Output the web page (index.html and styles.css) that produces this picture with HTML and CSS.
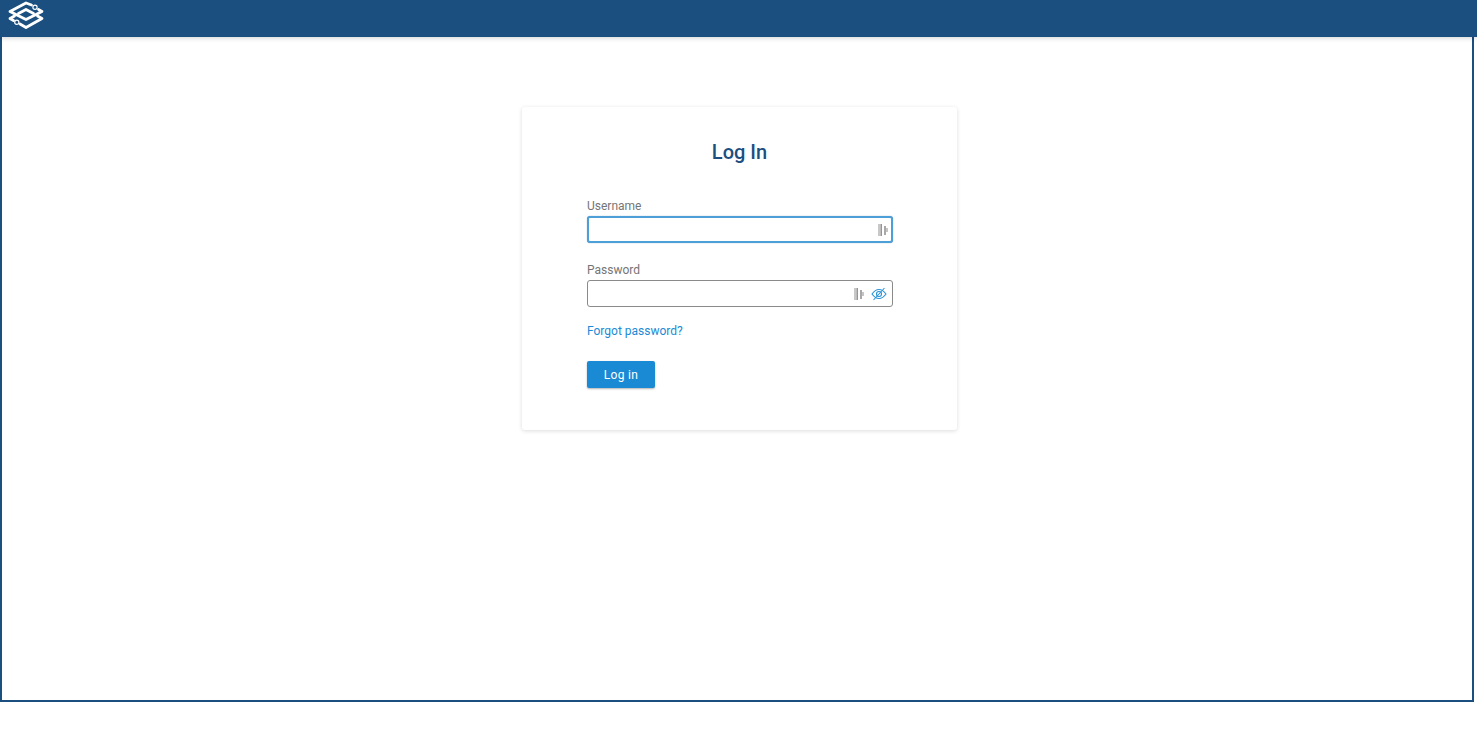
FILE: index.html
```html
<!DOCTYPE html>
<html lang="en">
<head>
<meta charset="utf-8">
<title>Log In</title>
<link rel="stylesheet" href="styles.css">
</head>
<body>
<div class="app">
  <header class="topbar">
    <svg class="logo" width="36" height="30" viewBox="0 0 36 30" fill="none" stroke="#fff" stroke-width="2.800" stroke-linejoin="round" stroke-linecap="round">
      <path d="M23.500 4 L18 2 L2 10.500 L18 18.500 L34 10.500 L30.500 8.500"/>
      <path d="M10.500 12.500 L18 8.500 L25.500 12.500"/>
      <path d="M6.500 15 L2 17.500 L5.500 19.500 M12 23 L18 26.500 L34 17.500 L29.500 15"/>
      <circle cx="27" cy="6.200" r="2.100" stroke-width="1.200"/>
      <circle cx="8.800" cy="21.200" r="2.100" stroke-width="1.200"/>
    </svg>
  </header>
  <main class="content">
    <section class="card">
      <h1 class="title">Log In</h1>
      <form class="form">
        <div class="field">
          <label class="label">Username</label>
          <div class="input input-focus">
            <svg class="key" width="10" height="14" viewBox="0 0 10 14"><path d="M0 1h2.500v12H0z" fill="#c8c8c8"/><path d="M2.500 1h1.500v12H2.500z" fill="#969696"/><path d="M6 3h2v9H6z" fill="#a8a8a8"/><path d="M8 5h2v4H8z" fill="#c4c4c4"/></svg>
          </div>
        </div>
        <div class="field">
          <label class="label">Password</label>
          <div class="input">
            <svg class="key" width="10" height="14" viewBox="0 0 10 14"><path d="M0 1h2.500v12H0z" fill="#c8c8c8"/><path d="M2.500 1h1.500v12H2.500z" fill="#969696"/><path d="M6 3h2v9H6z" fill="#a8a8a8"/><path d="M8 5h2v4H8z" fill="#c4c4c4"/></svg>
            <svg class="eye" width="16" height="14" viewBox="0 0 16 14" fill="none" stroke="#2a93d8" stroke-width="1.100">
              <path d="M1 7 C3.500 3.500 5.800 2.500 8 2.500 C10.200 2.500 12.500 3.500 15 7 C12.500 10.500 10.200 11.500 8 11.500 C5.800 11.500 3.500 10.500 1 7 Z"/>
              <circle cx="8" cy="7" r="2.500"/>
              <path d="M2.500 13 L13.500 1"/>
            </svg>
          </div>
        </div>
        <a class="forgot" href="#">Forgot password?</a>
        <button class="submit" type="button">Log in</button>
      </form>
    </section>
  </main>
</div>
</body>
</html>
```

FILE: styles.css
```css
* { box-sizing: border-box; }
html, body { margin: 0; padding: 0; background: #fff; }
body { font-family: Roboto, "Liberation Sans", sans-serif; height: 747px; overflow: hidden; }
.app {
  width: 1474px;
  height: 702px;
  border: 2px solid #1b4f80;
  border-top: 0;
  display: flex;
  flex-direction: column;
}
.topbar {
  height: 37px;
  margin: 0 -5px 0 -2px;
  background: #1b4f80;
  box-shadow: 0 1px 5px rgba(0, 0, 0, 0.18);
  padding: 1px 0 0 8px;
  flex: none;
}
.logo { display: block; }
.content {
  flex: 1;
  display: flex;
  justify-content: center;
  align-items: flex-start;
  padding: 70px 0 0 5px;
}
.card {
  width: 435px;
  height: 323px;
  background: #fff;
  border-radius: 3px;
  box-shadow: 0 1px 4px rgba(0, 0, 0, 0.14);
  padding: 33px 65px 0 65px;
}
.title {
  margin: 0 0 34px;
  height: 24px;
  line-height: 24px;
  font-size: 20px;
  font-weight: 500;
  color: #1b4f80;
  text-align: center;
}
.form { display: flex; flex-direction: column; align-items: flex-start; }
.field { width: 306px; margin-bottom: 19px; }
.field + .field { margin-bottom: 16px; }
.label {
  display: block;
  height: 17px;
  line-height: 17px;
  margin-bottom: 1px;
  font-size: 12px;
  color: #757575;
}
.input {
  height: 27px;
  border: 1px solid #8a8a8a;
  border-radius: 3px;
  background: #fff;
  display: flex;
  justify-content: flex-end;
  align-items: center;
  gap: 7px;
  padding-right: 5px;
}
.input-focus {
  border: 2px solid #4d9fd8;
  box-shadow: 0 0 1px rgba(27, 79, 128, 0.6);
  padding-right: 3px;
}
.forgot {
  display: block;
  height: 17px;
  line-height: 17px;
  font-size: 12px;
  color: #1a8ad5;
  text-decoration: none;
}
.submit {
  margin-top: 21px;
  width: 68px;
  height: 27px;
  border: 0;
  border-radius: 2px;
  background: #1a8ad5;
  box-shadow: 0 1px 2px rgba(0, 0, 0, 0.3);
  color: #fff;
  font-family: inherit;
  font-size: 12px;
  font-weight: 400;
  letter-spacing: 0.3px;
  padding: 0;
}
```
